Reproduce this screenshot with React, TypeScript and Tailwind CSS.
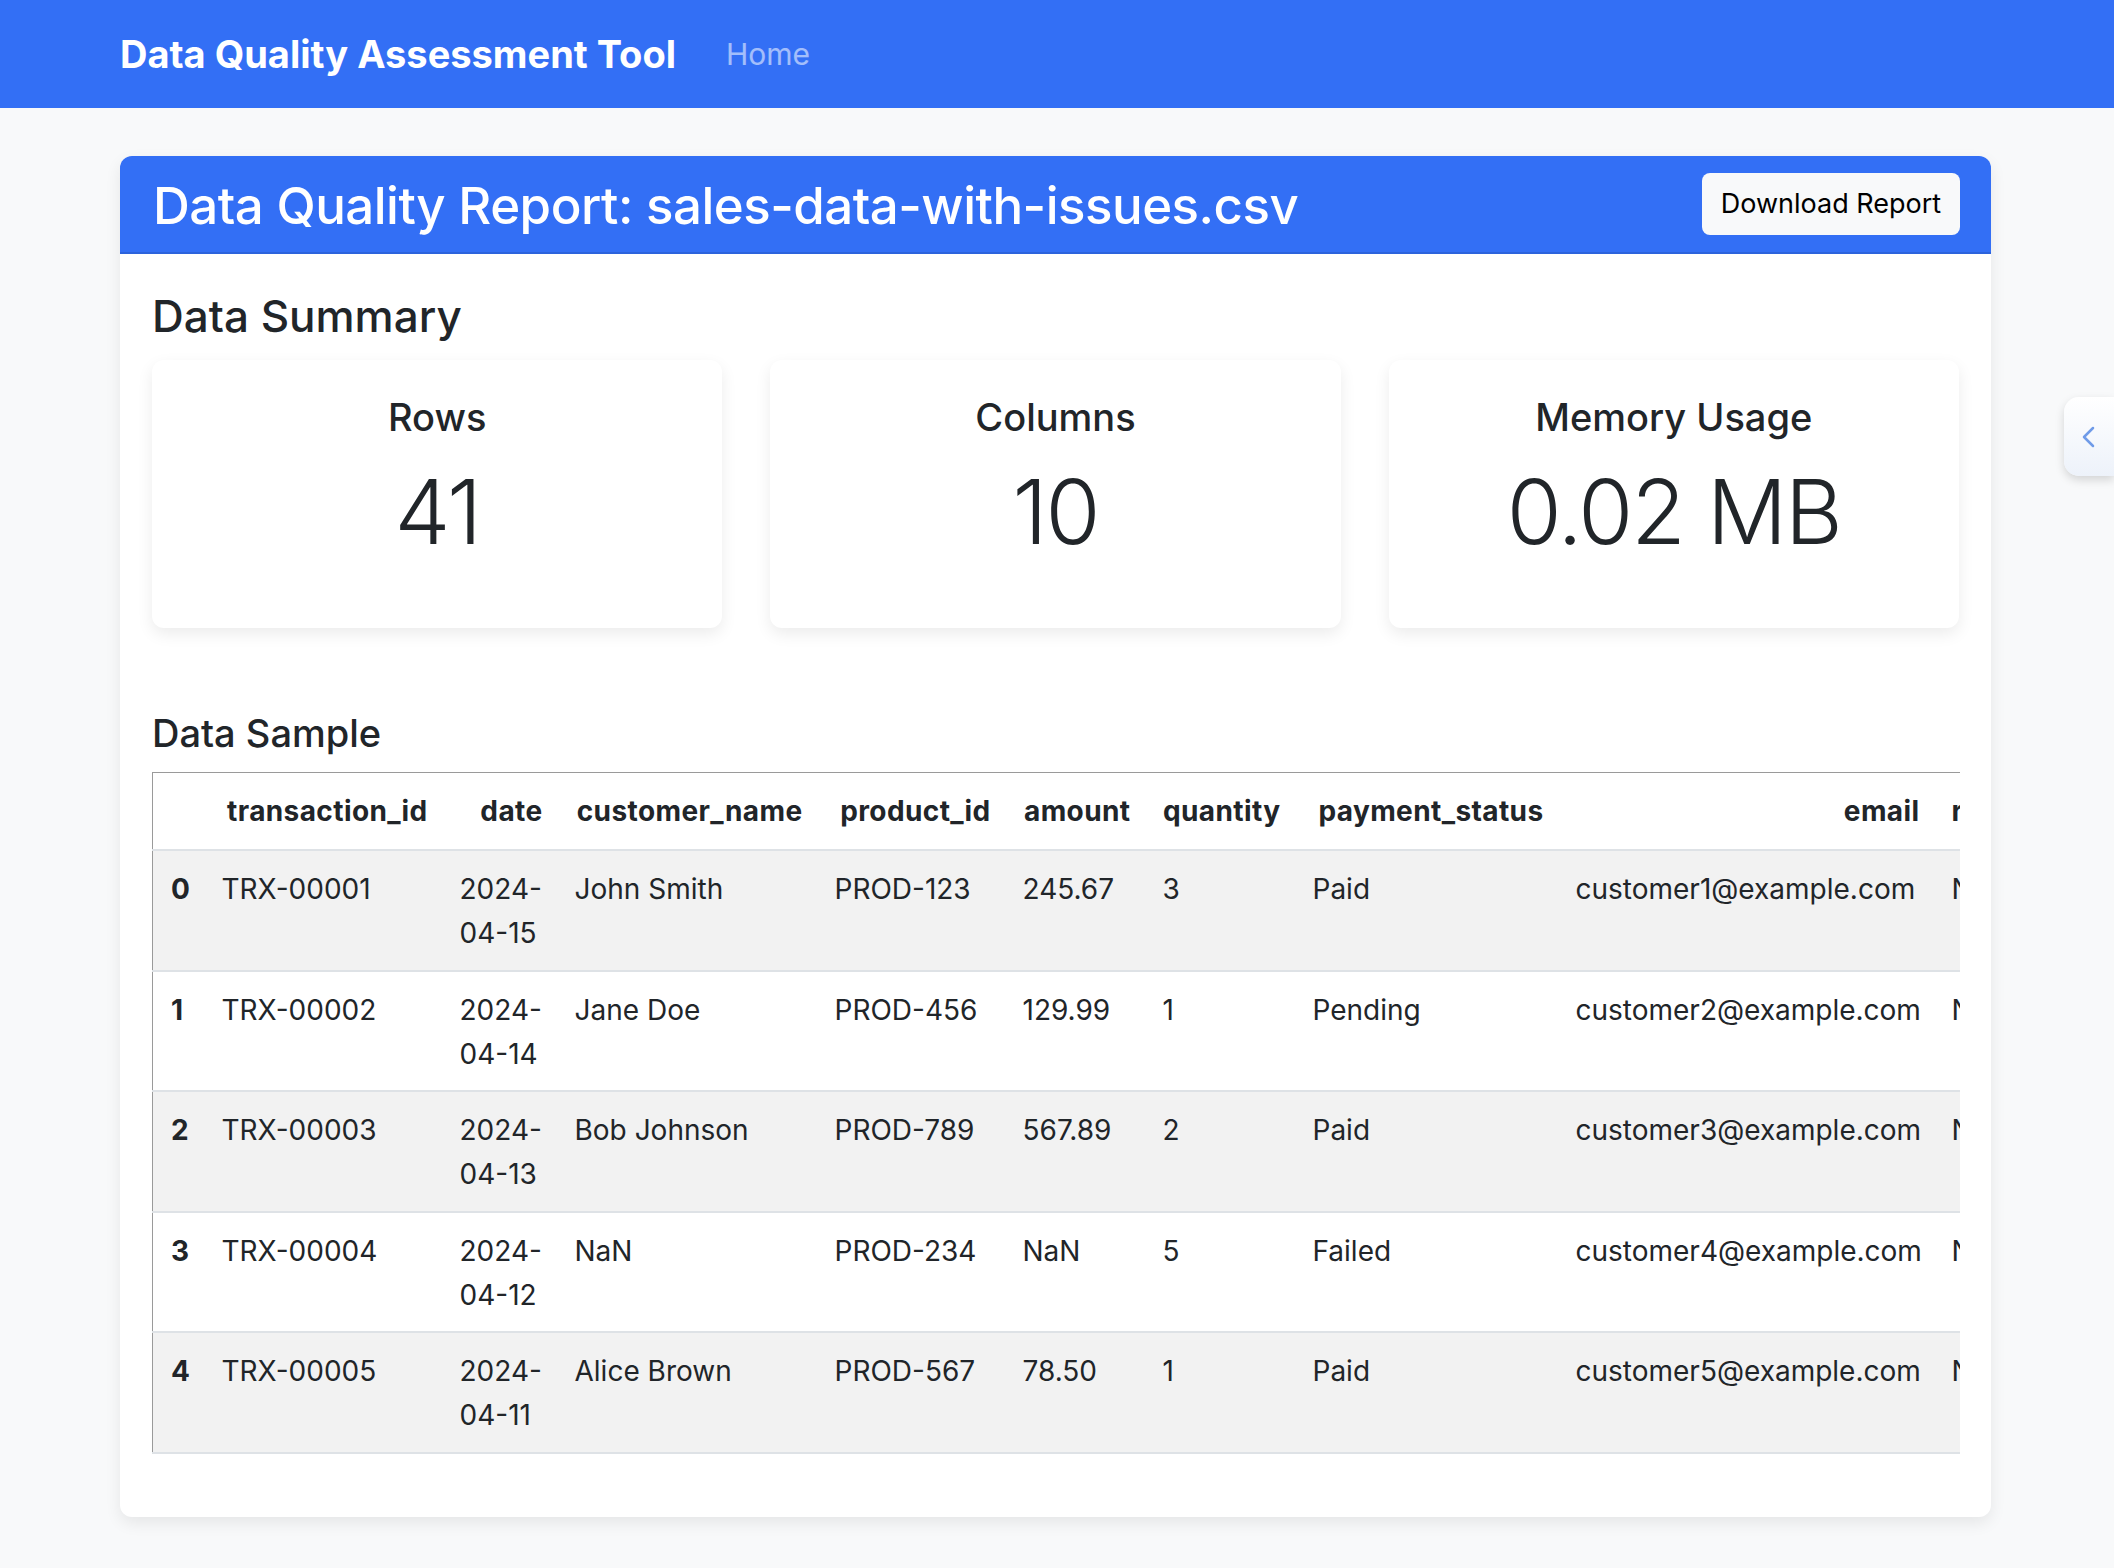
import React from "react";

// Sample rows shown in the report
const columns = [
    { key: "transaction_id", w: "w-[238px]" },
    { key: "date", w: "w-[115px]" },
    { key: "customer_name", w: "w-[260px]" },
    { key: "product_id", w: "w-[188px]" },
    { key: "amount", w: "w-[140px]" },
    { key: "quantity", w: "w-[150px]" },
    { key: "payment_status", w: "w-[263px]" },
    { key: "email", w: "w-[376px]" },
];

const rows = [
    ["TRX-00001", "2024-04-15", "John Smith", "PROD-123", "245.67", "3", "Paid", "customer1@example.com", "NaN"],
    ["TRX-00002", "2024-04-14", "Jane Doe", "PROD-456", "129.99", "1", "Pending", "customer2@example.com", "NaN"],
    ["TRX-00003", "2024-04-13", "Bob Johnson", "PROD-789", "567.89", "2", "Paid", "customer3@example.com", "NaN"],
    ["TRX-00004", "2024-04-12", "NaN", "PROD-234", "NaN", "5", "Failed", "customer4@example.com", "NaN"],
    ["TRX-00005", "2024-04-11", "Alice Brown", "PROD-567", "78.50", "1", "Paid", "customer5@example.com", "NaN"],
];

const stats = [
    { label: "Rows", value: "41" },
    { label: "Columns", value: "10" },
    { label: "Memory Usage", value: "0.02 MB" },
];

const StatCard: React.FC<{ label: string; value: string }> = ({ label, value }) => (
    <div className="h-[268px] bg-white rounded-[12px] shadow-[0_6px_16px_rgba(0,0,0,0.08)] flex flex-col items-center pt-[34px]">
        <div className="text-[38px] leading-[46px] font-medium">{label}</div>
        <div className="mt-[18px] text-[89px] leading-[107px] font-light tracking-[-2px]">{value}</div>
    </div>
);

export default function App() {
    return (
        <div className="min-h-screen bg-[#f8f9fa] text-[#212529] font-['Inter',sans-serif] relative">
            <nav className="h-[108px] bg-[#336ff5] flex items-center pl-[120px]">
                <span className="text-[38px] font-bold text-white">Data Quality Assessment Tool</span>
                <a className="ml-[50px] text-[30px] text-white/55">Home</a>
            </nav>

            <main className="pl-[120px] pt-[48px] pb-[48px]">
                <div className="w-[1871px] bg-white rounded-[12px] shadow-[0_6px_16px_rgba(0,0,0,0.08)] overflow-hidden">
                    <div className="h-[98px] bg-[#336ff5] border-b-2 border-[#2c63dc] flex items-center justify-between pl-[33px] pr-[31px]">
                        <h1 className="mt-[4px] text-[51px] font-medium text-white tracking-[-0.5px]">Data Quality Report: sales-data-with-issues.csv</h1>
                        <button className="w-[258px] h-[62px] bg-[#f8f9fa] rounded-[8px] text-[27px] text-black">Download Report</button>
                    </div>

                    <div className="px-[32px] pt-[35px] pb-[63px]">
                        <h2 className="text-[44px] leading-[54px] font-medium">Data Summary</h2>
                        <div className="mt-[17px] grid grid-cols-3 gap-[48px]">
                            {stats.map((s) => (
                                <StatCard key={s.label} label={s.label} value={s.value} />
                            ))}
                        </div>

                        <h2 className="mt-[83px] text-[38px] leading-[44px] font-medium">Data Sample</h2>
                        <div className="mt-[17px] w-[1808px] overflow-hidden">
                            <table className="table-fixed border-collapse w-[2000px] text-[28px] leading-[44px] border-t border-l border-[#9a9a9a]">
                                <thead>
                                    <tr className="border-b-2 border-[#dee2e6]">
                                        <th className="w-[53px] p-[16px]"></th>
                                        {columns.map((c) => (
                                            <th key={c.key} className={`${c.w} p-[16px] text-right font-bold tracking-[0.4px]`}>
                                                {c.key}
                                            </th>
                                        ))}
                                        <th className="w-[260px] p-[16px] text-left font-bold tracking-[0.4px]">return_reason</th>
                                    </tr>
                                </thead>
                                <tbody>
                                    {rows.map((r, i) => (
                                        <tr key={i} className={i % 2 === 0 ? "bg-[#f2f2f2] border-b-2 border-[#dee2e6]" : "bg-white border-b-2 border-[#dee2e6]"}>
                                            <th className="pt-[16px] pb-[14.5px] pl-[18px] pr-[16px] text-left align-top font-bold">{i}</th>
                                            {r.map((v, j) => (
                                                <td key={j} className="pt-[16px] pb-[14.5px] px-[16px] align-top">
                                                    {v}
                                                </td>
                                            ))}
                                        </tr>
                                    ))}
                                </tbody>
                            </table>
                        </div>
                    </div>
                </div>
            </main>

            {/* side drawer tab */}
            <div className="absolute right-0 top-[397px] w-[50px] h-[79px] rounded-l-[15px] bg-gradient-to-b from-white to-[#edf2fa] shadow-[0_4px_10px_rgba(0,0,0,0.15)] flex items-center pl-[17px]">
                <svg width="14" height="22" viewBox="0 0 14 22" fill="none">
                    <path d="M12 2 L3 11 L12 20" stroke="#6f9be8" strokeWidth="2.5" strokeLinecap="round" strokeLinejoin="round" />
                </svg>
            </div>
        </div>
    );
}
